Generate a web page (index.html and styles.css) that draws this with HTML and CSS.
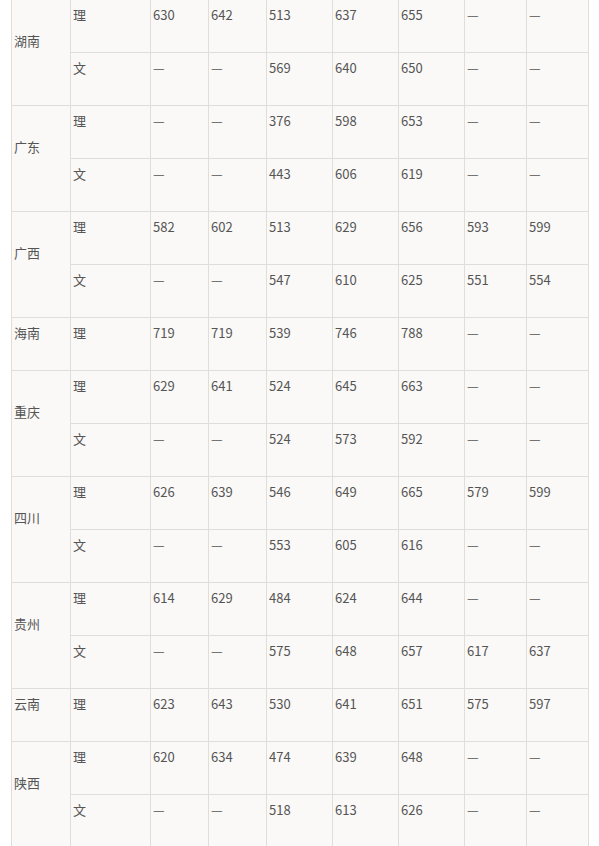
FILE: index.html
```html
<!DOCTYPE html>
<html lang="zh-CN">
<head>
<meta charset="utf-8">
<title>分数线</title>
<link rel="stylesheet" href="styles.css">
</head>
<body>
<div class="wrap">
<table class="score">
<colgroup>
<col class="c-prov"><col class="c-type"><col class="c-n1"><col class="c-n2"><col class="c-n3"><col class="c-n4"><col class="c-n5"><col class="c-n6"><col class="c-n7">
</colgroup>
<tbody>
<tr><td rowspan="2" class="prov">湖南</td><td>理</td><td>630</td><td>642</td><td>513</td><td>637</td><td>655</td><td>—</td><td>—</td></tr>
<tr><td>文</td><td>—</td><td>—</td><td>569</td><td>640</td><td>650</td><td>—</td><td>—</td></tr>
<tr><td rowspan="2" class="prov">广东</td><td>理</td><td>—</td><td>—</td><td>376</td><td>598</td><td>653</td><td>—</td><td>—</td></tr>
<tr><td>文</td><td>—</td><td>—</td><td>443</td><td>606</td><td>619</td><td>—</td><td>—</td></tr>
<tr><td rowspan="2" class="prov">广西</td><td>理</td><td>582</td><td>602</td><td>513</td><td>629</td><td>656</td><td>593</td><td>599</td></tr>
<tr><td>文</td><td>—</td><td>—</td><td>547</td><td>610</td><td>625</td><td>551</td><td>554</td></tr>
<tr><td class="prov">海南</td><td>理</td><td>719</td><td>719</td><td>539</td><td>746</td><td>788</td><td>—</td><td>—</td></tr>
<tr><td rowspan="2" class="prov">重庆</td><td>理</td><td>629</td><td>641</td><td>524</td><td>645</td><td>663</td><td>—</td><td>—</td></tr>
<tr><td>文</td><td>—</td><td>—</td><td>524</td><td>573</td><td>592</td><td>—</td><td>—</td></tr>
<tr><td rowspan="2" class="prov">四川</td><td>理</td><td>626</td><td>639</td><td>546</td><td>649</td><td>665</td><td>579</td><td>599</td></tr>
<tr><td>文</td><td>—</td><td>—</td><td>553</td><td>605</td><td>616</td><td>—</td><td>—</td></tr>
<tr><td rowspan="2" class="prov">贵州</td><td>理</td><td>614</td><td>629</td><td>484</td><td>624</td><td>644</td><td>—</td><td>—</td></tr>
<tr><td>文</td><td>—</td><td>—</td><td>575</td><td>648</td><td>657</td><td>617</td><td>637</td></tr>
<tr><td class="prov">云南</td><td>理</td><td>623</td><td>643</td><td>530</td><td>641</td><td>651</td><td>575</td><td>597</td></tr>
<tr><td rowspan="2" class="prov">陕西</td><td>理</td><td>620</td><td>634</td><td>474</td><td>639</td><td>648</td><td>—</td><td>—</td></tr>
<tr><td>文</td><td>—</td><td>—</td><td>518</td><td>613</td><td>626</td><td>—</td><td>—</td></tr>
</tbody>
</table>
</div>
</body>
</html>
```
FILE: styles.css
```css
html, body {
  margin: 0;
  padding: 0;
  background: #ffffff;
}
.wrap {
  padding-left: 11px;
  margin-top: -1px;
}
.score {
  border-collapse: collapse;
  table-layout: fixed;
  width: 577px;
  background: #faf9f7;
  font-family: "Microsoft YaHei", "Noto Sans CJK SC", sans-serif;
  font-size: 13px;
  color: #555555;
}
.score td {
  border: 1px solid #dfdedb;
  padding: 5px 2px 27px 2px;
  line-height: 20px;
  height: 20px;
  vertical-align: middle;
  text-align: left;
  white-space: nowrap;
}
.score td.prov {
  padding-top: 4px;
}
.c-prov { width: 59px; }
.c-type { width: 80px; }
.c-n1 { width: 58px; }
.c-n2 { width: 58px; }
.c-n3 { width: 66px; }
.c-n4 { width: 66px; }
.c-n5 { width: 66px; }
.c-n6 { width: 62px; }
.c-n7 { width: 62px; }
```
